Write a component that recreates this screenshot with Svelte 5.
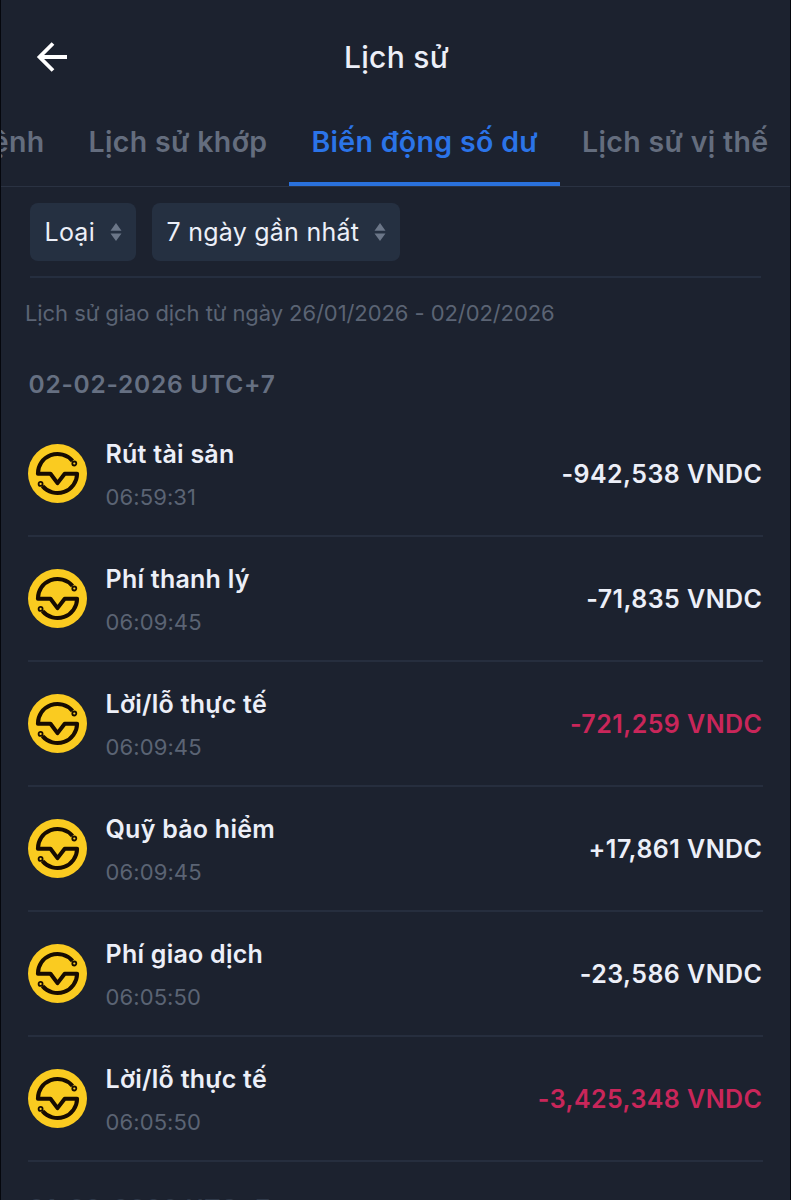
<script lang="ts">
  type Entry = {
    id: number;
    title: string;
    time: string;
    amount: string;
    loss?: boolean;
  };

  const tabs = ['Lịch sử lệnh', 'Lịch sử khớp', 'Biến động số dư', 'Lịch sử vị thế'];
  const filters = ['Loại', '7 ngày gần nhất'];

  const entries: Entry[] = [
    { id: 1, title: 'Rút tài sản', time: '06:59:31', amount: '-942,538' },
    { id: 2, title: 'Phí thanh lý', time: '06:09:45', amount: '-71,835' },
    { id: 3, title: 'Lời/lỗ thực tế', time: '06:09:45', amount: '-721,259', loss: true },
    { id: 4, title: 'Quỹ bảo hiểm', time: '06:09:45', amount: '+17,861' },
    { id: 5, title: 'Phí giao dịch', time: '06:05:50', amount: '-23,586' },
    { id: 6, title: 'Lời/lỗ thực tế', time: '06:05:50', amount: '-3,425,348', loss: true },
  ];

  let activeTab = $state(2);
</script>

<div class="screen">
  <header>
    <button class="back" aria-label="Quay lại">
      <svg width="32" height="32" viewBox="0 0 32 32" fill="none" stroke="#fff" stroke-width="3.8">
        <path d="M31 16H4M17 2.5L3.5 16L17 29.5" />
      </svg>
    </button>
    <h1>Lịch sử</h1>
  </header>

  <nav>
    {#each tabs as tab, i}
      <button class="tab" class:active={i === activeTab} onclick={() => (activeTab = i)}>
        <span>{tab}</span>
      </button>
    {/each}
  </nav>

  <div class="filters">
    {#each filters as filter}
      <button class="filter">
        <span>{filter}</span>
        <svg width="12" height="20" viewBox="0 0 12 20" fill="#6b7688">
          <path d="M6 1L11.5 8.7H0.5zM6 19L0.5 11.6H11.5z" />
        </svg>
      </button>
    {/each}
  </div>

  <p class="range">Lịch sử giao dịch từ ngày 26/01/2026 - 02/02/2026</p>

  <h2>02-02-2026 UTC+7</h2>
  <ul>
    {#each entries as entry (entry.id)}
      <li>
        <svg class="coin" width="60" height="60" viewBox="-29.5 -29.5 60 60" fill="none">
          <circle r="29.5" fill="#facb20" />
          <g stroke="#170c02" stroke-width="4" stroke-linejoin="round">
            <path d="M15 -12.6A19.6 19.6 0 0 0 -19.6 0.2H-7L0 9.6L7.2 0.2H19.6A19.6 19.6 0 0 1 -15 12.6" />
            <circle cx="16.8" cy="-10" r="2" fill="#facb20" stroke-width="1.8" />
            <circle cx="-16.9" cy="10.4" r="2" fill="#facb20" stroke-width="1.8" />
          </g>
        </svg>
        <div class="info">
          <span class="title">{entry.title}</span>
          <span class="time">{entry.time}</span>
        </div>
        <span class="amount" class:loss={entry.loss}>{entry.amount} VNDC</span>
      </li>
    {/each}
  </ul>
  <h2 class="next">01-02-2026 UTC+7</h2>
</div>

<style>
  :global(body) {
    background: #1c222f;
  }

  .screen {
    box-sizing: border-box;
    width: 791px;
    height: 1200px;
    overflow: hidden;
    border-left: 1px solid #05070d;
    border-right: 1px solid #05070d;
    background: #1c222f;
    color: #eceff8;
    font-family: Inter, "Liberation Sans", sans-serif;
  }

  button {
    padding: 0;
    border: 0;
    background: none;
    color: inherit;
    font: inherit;
  }

  header {
    display: grid;
    grid-template-columns: 101px 1fr 99px;
    align-items: center;
    height: 115px;
  }

  .back {
    display: flex;
    padding: 0 0 1px 35px;
  }

  h1 {
    margin: 0 0 2px;
    text-align: center;
    font-size: 30px;
    font-weight: 500;
    letter-spacing: 0.3px;
  }

  nav {
    display: flex;
    justify-content: flex-end;
    height: 71px;
    border-bottom: 1px solid #2a3242;
  }

  .tab {
    box-sizing: border-box;
    flex: none;
    height: 71px;
    padding: 0 21.5px 15px 22.5px;
    border-bottom: 4px solid transparent;
    color: #646d7e;
    font-size: 28.5px;
    font-weight: 600;
    letter-spacing: 0.33px;
    white-space: nowrap;
  }

  .tab.active {
    border-color: #2a71dc;
    color: #2b74e8;
  }

  .filters {
    display: flex;
    gap: 16px;
    margin: 0 29px;
    padding: 16px 0 15px;
    border-bottom: 2px solid #252e3f;
  }

  .filter {
    display: flex;
    align-items: center;
    gap: 15px;
    height: 58px;
    padding: 0 14px 0 14.5px;
    border-radius: 8px;
    background: #253041;
    font-size: 25px;
    letter-spacing: 0.25px;
  }

  .range {
    margin: 21px 24px 0;
    color: #5b6474;
    font-size: 22px;
    letter-spacing: -0.08px;
    line-height: 28px;
  }

  h2 {
    margin: 42px 28px 0 27.5px;
    color: #667082;
    font-size: 24.5px;
    font-weight: 600;
    letter-spacing: 0.75px;
    line-height: 30px;
  }

  ul {
    margin: 13px 27px 0 27px;
    padding: 0;
    list-style: none;
  }

  li {
    box-sizing: border-box;
    display: flex;
    align-items: center;
    height: 125px;
    border-bottom: 2px solid #262e3e;
  }

  .coin {
    flex: none;
  }

  .info {
    display: flex;
    flex: 1;
    flex-direction: column;
    gap: 13px;
    margin: 3px 0 0 17.5px;
  }

  .title {
    font-size: 25px;
    font-weight: 600;
    letter-spacing: 0.25px;
    line-height: 30px;
  }

  .time {
    color: #5b6474;
    font-size: 22px;
    letter-spacing: 0.1px;
    line-height: 30px;
  }

  .amount {
    margin-right: 0.5px;
    font-size: 25px;
    font-weight: 600;
    letter-spacing: 0.45px;
  }

  .loss {
    color: #c9265a;
  }

  .next {
    margin-top: 31px;
    color: #2f3949;
  }
</style>
